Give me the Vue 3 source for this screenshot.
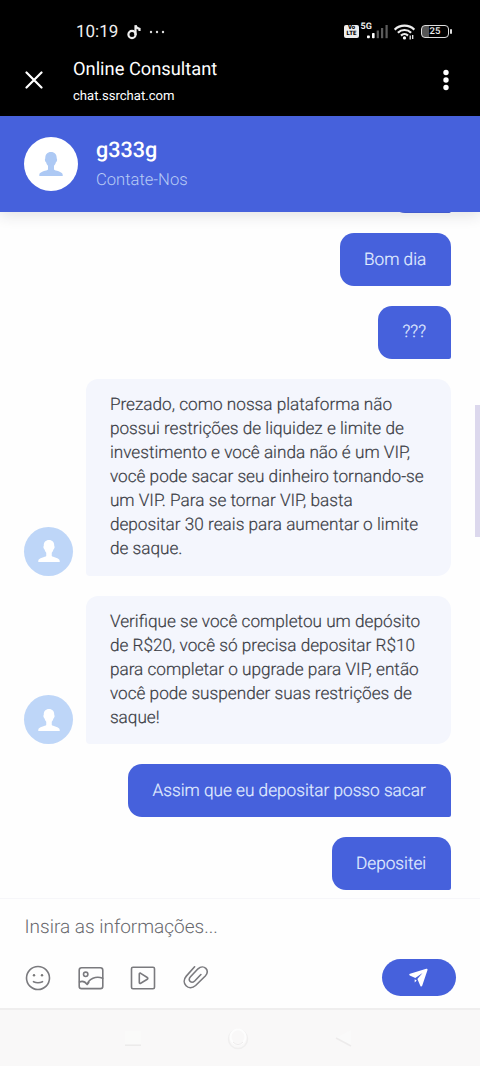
<script setup>
const messages = [
  { out: true, lines: [], cls: 'first' },
  { out: true, lines: ['Bom dia'], cls: 'hello' },
  { out: true, lines: ['???'], cls: 'question' },
  {
    out: false,
    lines: [
      'Prezado, como nossa plataforma não',
      'possui restrições de liquidez e limite de',
      'investimento e você ainda não é um VIP,',
      'você pode sacar seu dinheiro tornando-se',
      'um VIP. Para se tornar VIP, basta',
      'depositar 30 reais para aumentar o limite',
      'de saque.',
    ],
  },
  {
    out: false,
    lines: [
      'Verifique se você completou um depósito',
      'de R$20, você só precisa depositar R$10',
      'para completar o upgrade para VIP, então',
      'você pode suspender suas restrições de',
      'saque!',
    ],
  },
  { out: true, lines: ['Assim que eu depositar posso sacar'], cls: 'withdraw' },
  { out: true, lines: ['Depositei'], cls: 'deposited' },
]
const person =
  'M12 0c3.700 0 5.700 2.500 5.700 6 0 .8.500.9.400 2-.1 1.200-.7 1.800-1.200 2.300-.3 1.500-1 2.700-1.900 3.500v3.700c.8 1.300 8.700 1.800 8.700 5.300V24H.3v-1.200c0-3.500 7.900-4 8.700-5.300v-3.700c-.9-.8-1.600-2-1.900-3.500-.5-.5-1.100-1.100-1.200-2.300-.1-1.100.4-1.200.4-2C6.300 2.500 8.300 0 12 0z'
</script>

<template>
  <div class="phone">
    <div class="system">
      <div class="status">
        <span class="time">10:19</span>
        <svg class="note" width="14" height="16" viewBox="0 0 14 16" fill="none" stroke="#eee" stroke-width="2.200">
          <circle cx="5" cy="10.500" r="3.600" />
          <path d="M8.500 11V1.200c.3 2.300 1.800 3.300 4 3.700v2" />
        </svg>
        <svg class="more" width="16" height="4" viewBox="0 0 16 4" fill="#ddd">
          <circle cx="2" cy="2" r="1.200" /><circle cx="8" cy="2" r="1.200" /><circle cx="14" cy="2" r="1.200" />
        </svg>
        <span class="volte"><span>Vo</span><span>LTE</span></span>
        <span class="fiveg">5G</span>
        <svg class="signal" width="22" height="15" viewBox="0 0 22 15">
          <g fill="#fff"><rect x="0" y="11.500" width="2.800" height="2.700" rx=".7" /><rect x="5" y="9" width="2.600" height="5.200" rx=".7" /></g>
          <g fill="#5c5c5c"><rect x="9.700" y="6.500" width="2.200" height="7.700" /><rect x="14" y="4" width="2.200" height="10.200" /><rect x="18.500" y="1" width="2.200" height="13.200" /></g>
        </svg>
        <svg class="wifi" width="21" height="16" viewBox="0 0 21 16" fill="none" stroke="#eee" stroke-width="2.200">
          <path d="M.7 5.600C6 .3 15 .3 20.300 5.600M3.900 8.700c3.600-3.600 9.600-3.600 13.200 0M7 11.600c2-1.900 5-1.900 7 0" />
          <circle cx="10.500" cy="13.900" r="1.600" fill="#fff" stroke="none" />
          <path d="M16.200 11.500v4M18.700 11v4" stroke-width="1.300" />
        </svg>
        <span class="battery"><span>25</span></span>
      </div>
      <div class="toolbar">
        <svg class="close" width="18" height="18" viewBox="0 0 18 18" stroke="#fff" stroke-width="2.200" stroke-linecap="round">
          <path d="M1.500 1.500l15 15M16.500 1.500l-15 15" />
        </svg>
        <div class="page">
          <div class="title"><span>Online Consultant</span></div>
          <div class="url"><span>chat.ssrchat.com</span></div>
        </div>
        <svg class="kebab" width="6" height="22" viewBox="0 0 6 22" fill="#fff">
          <circle cx="3" cy="3.500" r="2.700" /><circle cx="3" cy="11" r="2.700" /><circle cx="3" cy="18.500" r="2.700" />
        </svg>
      </div>
    </div>

    <header class="header">
      <div class="avatar large">
        <svg width="24" height="24" viewBox="0 0 24 24" fill="#adc9f4"><path :d="person" /></svg>
      </div>
      <div>
        <div class="name"><span>g333g</span></div>
        <div class="sub"><span>Contate-Nos</span></div>
      </div>
    </header>

    <main class="chat">
      <div v-for="(m, i) in messages" :key="i" class="row" :class="[{ out: m.out }, m.cls]">
        <div v-if="!m.out" class="avatar">
          <svg width="22" height="22" viewBox="0 0 24 24" fill="#fff"><path :d="person" /></svg>
        </div>
        <div class="bubble"><div v-for="l in m.lines" :key="l">{{ l }}</div></div>
      </div>
      <div class="scroll"></div>
    </main>

    <footer class="composer">
      <div class="placeholder">Insira as informações...</div>
      <div class="tools">
        <svg class="tool" width="26" height="26" viewBox="0 0 26 26">
          <circle cx="13" cy="13" r="11.500" /><path d="M8.500 16.700c2.600 1.200 6.400 1.200 9 0" />
          <circle cx="9" cy="10.300" r="1.200" fill="#777" stroke="none" /><circle cx="17" cy="10.300" r="1.200" fill="#777" stroke="none" />
        </svg>
        <svg class="tool" width="26" height="26" viewBox="0 0 26 26">
          <rect x="1.200" y="2.800" width="23.600" height="20.800" rx="2.400" /><circle cx="7.700" cy="9.300" r="2.200" />
          <path d="M1.500 17c3-1.400 5.500-.5 7.700 2.500 1.700-5.500 8.500-9 15.500-6.200M9.200 19.500l1.600-2.100" />
        </svg>
        <svg class="tool" width="26" height="26" viewBox="0 0 26 26">
          <rect x="1.500" y="2.300" width="23" height="21.400" rx="1.500" />
          <path d="M9.300 9v8.400c0 .8.700 1.200 1.400.8l6.600-4c.7-.4.7-1.300 0-1.700l-6.600-4.200c-.7-.4-1.400 0-1.400.7z" />
        </svg>
        <svg class="tool" width="26" height="26" viewBox="0 0 26 26">
          <path d="M11.600 1.800L3.300 11.100c-6 7 2.300 15.600 9.300 9.400l9.700-9.500c5.500-5.700-1.700-12.300-7.300-7.200l-7.500 8c-3.500 3.800 1 7.200 4.200 4.200l6.200-6.500" />
        </svg>
        <div class="send">
          <svg width="19" height="19" viewBox="0 0 19 19" fill="#fff">
            <path d="M17.300.7L1 5.800c-.9.300-1 1.300-.2 1.700L6.300 10 13.500 5 8.400 11l3 6.900c.4.800 1.500.7 1.800-.2L18.500 2c.3-.8-.4-1.500-1.200-1.300zM5.700 11.300v3.300l2-2z" />
          </svg>
        </div>
      </div>
    </footer>

    <nav class="nav">
      <svg width="18" height="24" viewBox="0 0 18 24"><path d="M1 4h16v14H1z" fill="#fafaf9" /><path d="M1 18.200h16" stroke="#eae9e8" stroke-width="1.400" /></svg>
      <svg width="24" height="24" viewBox="0 0 24 24" fill="none"><circle cx="12" cy="12" r="9.500" stroke="#f0efef" stroke-width="1.500" /><circle cx="12" cy="10" r="7.500" stroke="#fdfdfd" stroke-width="2" /><path d="M7 15q5 5 10 0" stroke="#eceaea" /></svg>
      <svg width="20" height="24" viewBox="0 0 20 24"><path d="M2 11L17 3v15z" fill="#fafafa" /><path d="M2 11l15 8" stroke="#edebeb" stroke-width="1.500" /></svg>
    </nav>
  </div>
</template>

<style>
body { margin: 0; background: #fefefe; }
</style>

<style scoped>
.phone { width: 480px; height: 1066px; overflow: hidden; display: flex; flex-direction: column; font-family: Roboto, "Liberation Sans", sans-serif; background: #fefefe; text-rendering: geometricPrecision; }
.phone * { box-sizing: border-box; }
svg { display: block; flex: none; }
.system { height: 116px; background: #000; flex: none; color: #fff; }
.status { height: 50px; padding: 13px 27px 0 76px; display: flex; align-items: center; color: #eee; }
.time { width: 51px; font-size: 17px; line-height: 20px; }
.more { margin-left: 8px; }
.volte { margin-left: 179px; width: 15px; height: 13px; border-radius: 2px; background: #eee; color: #000; font-size: 6px; line-height: 6px; font-weight: 900; text-align: center; display: flex; flex-direction: column; flex: none; }
.fiveg { font-size: 9px; font-weight: 700; line-height: 9px; margin: -8px 0 0 1.500px; width: 11.500px; flex: none; }
.signal { margin-left: -5px; }
.wifi { margin-left: 5px; }
.battery { position: relative; margin-left: 6px; width: 28px; height: 13px; border: 1.500px solid #ddd; border-radius: 4px; font-size: 9.500px; line-height: 11px; font-weight: 500; text-align: center; background: linear-gradient(90deg, #555 25%, #000 25%); flex: none; }
.battery::after { content: ''; position: absolute; right: -4px; top: 3px; width: 2px; height: 5px; background: #ddd; border-radius: 1px; }
.toolbar { display: flex; height: 66px; padding: 0 31.500px 0 25px; }
.close { margin-top: 21px; }
.page { margin-left: 30px; flex: 1; }
.title { font-size: 18.300px; line-height: 24px; margin-top: 8px; }
.url { font-size: 13.100px; line-height: 18px; margin-top: 6px; }
.kebab { margin-top: 19px; }
.header { height: 96px; flex: none; background: #4661dc; box-shadow: 0 3px 14px rgba(40, 40, 60, .14); position: relative; z-index: 2; padding: 0 24px; display: flex; align-items: center; gap: 18px; }
.avatar { width: 49px; height: 49px; border-radius: 50%; background: #bed6f8; display: flex; align-items: center; justify-content: center; flex: none; }
.avatar.large { width: 54px; height: 54px; background: #fff; }
.name { color: #fff; font-size: 21.600px; line-height: 28px; font-weight: 500; margin-top: 1px; }
.sub { color: #b7caf5; font-size: 16.600px; line-height: 24px; font-weight: 300; margin-top: 4px; }
.chat { height: 686.500px; flex: none; position: relative; display: flex; flex-direction: column; justify-content: flex-end; gap: 20px; padding: 0 29.500px 7.500px 24.400px; overflow: hidden; border-bottom: 1px solid #f6f6f9; }
.row { display: flex; align-items: flex-end; gap: 12.500px; flex: none; }
.out { justify-content: flex-end; }
.bubble { flex: 1; min-width: 0; padding: 14.400px 24px; border-radius: 12px 14px 14px 4px; background: #f4f6fd; color: #3b3d45; font-size: 17.200px; line-height: 24px; white-space: nowrap; font-weight: 300; -webkit-text-stroke: .2px currentColor; }
.out .bubble { flex: none; padding-left: 24.500px; background: #4661dc; color: #e1edff; border-radius: 14px 14px 2px 14px; }
.first .bubble { width: 60px; height: 52.800px; }
.hello .bubble { width: 111px; }
.question .bubble { width: 72.500px; }
.withdraw .bubble { width: 322.500px; }
.deposited .bubble { width: 119px; }
.scroll { position: absolute; right: 0; top: 193px; width: 5px; height: 132px; background: #dcd8ed; }
.composer { height: 109px; flex: none; }
.placeholder { padding: 14px 24.500px 0; font-size: 19px; line-height: 28px; font-weight: 300; color: #68686d; }
.tools { display: flex; align-items: center; padding: 18.500px 24.500px 0 25px; gap: 26.700px; }
.tool { fill: none; stroke: #7a7a7e; stroke-width: 1.600; stroke-linecap: round; stroke-linejoin: round; }
.send { margin-left: auto; width: 74px; height: 37px; border-radius: 19px; background: #4661dc; display: flex; align-items: center; justify-content: center; }
.nav { flex: 1; border-top: 2px solid #efeeee; background: #f9f8f8; display: flex; padding: 17px 0 0 124px; gap: 84px; }
</style>
